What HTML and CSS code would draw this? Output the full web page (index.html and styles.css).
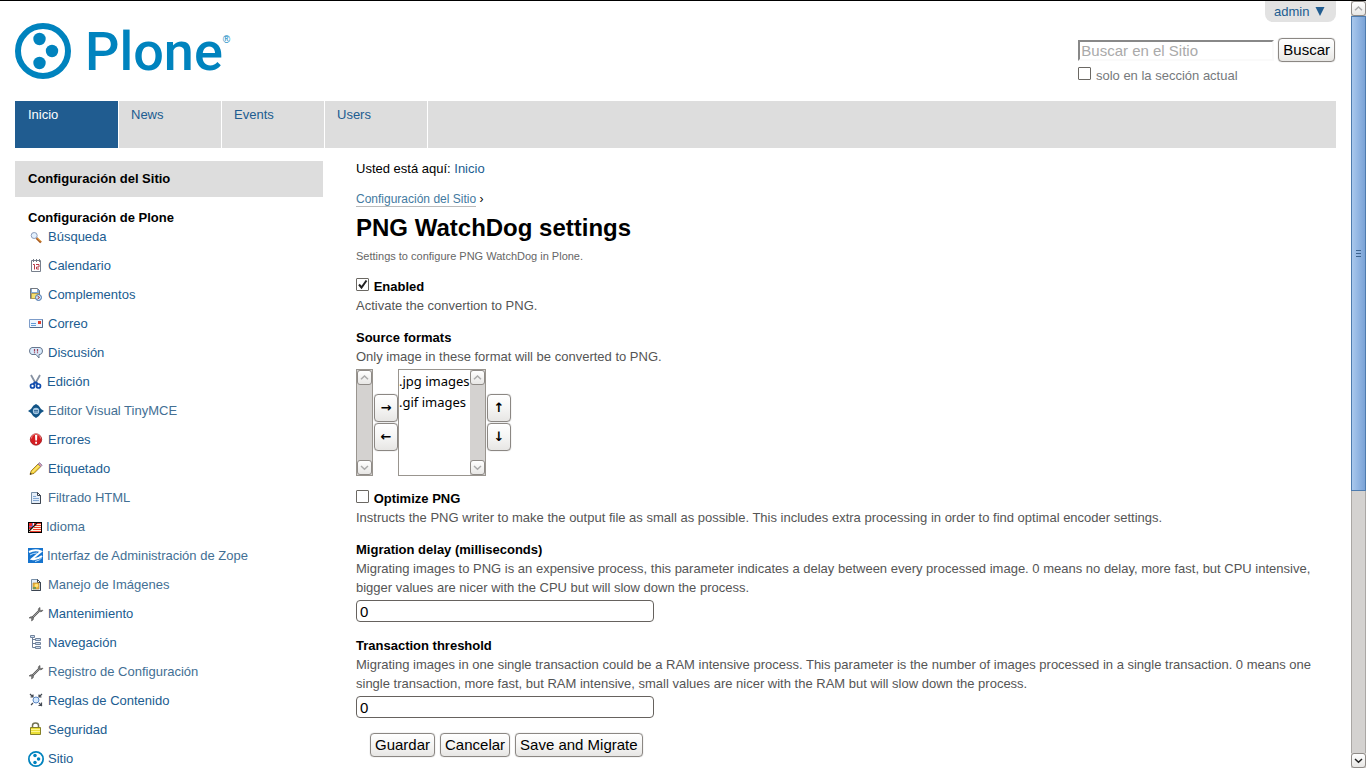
FILE: index.html
```html
<!DOCTYPE html>
<html lang="es">
<head>
<meta charset="utf-8">
<title>PNG WatchDog settings</title>
<link rel="stylesheet" href="styles.css">
</head>
<body>
<svg class="defs" aria-hidden="true">
  <symbol id="chev-up" viewBox="0 0 9 9"><path d="M1 6.2 4.5 3 8 6.2" fill="none" stroke="currentColor" stroke-width="1.5"/></symbol>
  <symbol id="chev-down" viewBox="0 0 9 9"><path d="M1 3 4.5 6.2 8 3" fill="none" stroke="currentColor" stroke-width="1.5"/></symbol>
  <symbol id="plone" viewBox="0 0 56 56"><circle cx="28" cy="28" r="25" fill="#fff" stroke="#0083be" stroke-width="6"/><circle cx="24.500" cy="16" r="6.200" fill="#0083be"/><circle cx="37" cy="28" r="6.200" fill="#0083be"/><circle cx="24.500" cy="40" r="6.200" fill="#0083be"/></symbol>
  <symbol id="wrench" viewBox="0 0 16 16"><path d="M4.500 11.500 11 5" stroke="#555" stroke-width="2.200"/><path d="M5 11 11 5" stroke="#bbb" stroke-width=".7"/><path d="M12 1.500c-1.500.5-2 1.800-1.500 3.500 1.500 1.200 3.500 1 4.500-.8l-2 .3-1-1z M1 12c1.500-1.700 3.200-1.500 4.200-.8.700 1.600.2 3-1.700 3.700l.3-1.900-1.300-1z" fill="#777" stroke="#555" stroke-width=".6"/></symbol>
  <symbol id="page" viewBox="0 0 16 16"><path d="M3.500 2.500h6l3 3v8h-9z" fill="#e4eef9" stroke="#7890a8"/><path d="M9.500 2.500v3h3z" fill="#fff" stroke="#3c4450"/><path d="M12.500 5.500v8h-9" fill="none" stroke="#3c4450"/></symbol>
</svg>
<div class="window">
  <div class="page">
    <header class="header">
      <a class="logo" href="#" aria-label="Plone">
        <svg class="logo-mark"><use href="#plone"/></svg>
        <span class="logo-name">Plone</span><span class="logo-reg">®</span>
      </a>
      <div class="tools">
        <a class="user" href="#">admin <svg class="user-arrow" viewBox="0 0 10 10"><path d="M0 0h10L5 10z" fill="#205c90"/></svg></a>
        <form class="search">
          <div class="search-row">
            <input class="search-input" type="text" placeholder="Buscar en el Sitio" aria-label="Buscar en el Sitio">
            <button class="btn" type="button">Buscar</button>
          </div>
          <label class="search-scope"><input class="check" type="checkbox"> solo en la sección actual</label>
        </form>
      </div>
    </header>
    <nav class="tabs">
      <a class="tab tab-on" href="#">Inicio</a>
      <a class="tab" href="#">News</a>
      <a class="tab" href="#">Events</a>
      <a class="tab" href="#">Users</a>
    </nav>
    <div class="columns">
      <aside class="side">
        <h2 class="side-head">Configuración del Sitio</h2>
        <h3 class="side-sub">Configuración de Plone</h3>
        <ul class="menu">
          <li><a class="item" href="#"><svg class="icon" viewBox="0 0 16 16"><path d="M8.500 9 13 13.500" stroke="#a8591e" stroke-width="2.400"/><path d="M9.500 9 13 12.500" stroke="#ffc35c" stroke-width="1"/><circle cx="6.200" cy="6.500" r="3" fill="#e3f1ff" stroke="#8c9cba"/></svg>Búsqueda</a></li>
          <li><a class="item" href="#"><svg class="icon" viewBox="0 0 16 16"><path d="M3.500 2.500h9v11h-9z" fill="#fff" stroke="#777f8c"/><path d="M5.500 1v3M8.500 1v3M11.500 1v3" stroke="#737b88"/><path d="M5 6.500h1.500v5M8 6.500h3v2.500H8.500v2H11" fill="none" stroke="#b83b49"/></svg>Calendario</a></li>
          <li><a class="item" href="#"><svg class="icon" viewBox="0 0 16 16"><path d="M2.500 1.500h7l2 2v8h-9z" fill="#82a9d5" stroke="#737880"/><path d="M4 2h5v3H4z" fill="#fff"/><path d="M3.500 6.500h7v5h-7z" fill="#f5e070" stroke="#b69c50"/><circle cx="10.500" cy="10.500" r="3" fill="#c6e2fb" stroke="#4c75a9"/><path d="m9.500 9 2 1.500-2 1.500" fill="none" stroke="#a33"/></svg>Complementos</a></li>
          <li><a class="item" href="#"><svg class="icon" viewBox="0 0 16 16"><path d="M1.500 3.500h13v8h-13z" fill="#eef5ff" stroke="#7d9cc9"/><path d="M2 11.500h12.500v-8" fill="none" stroke="#526a8b"/><path d="M3 7.500h5M3 9.500h5" stroke="#6199d5"/><path d="M10 5h3v3h-3z" fill="#e23d2d"/></svg>Correo</a></li>
          <li><a class="item" href="#"><svg class="icon" viewBox="0 0 16 16"><path d="M4 2.500h8Q14.500 3 14.500 6T12 9.500h-1v3.500L8 9.500H4Q1.500 9 1.500 6T4 2.500z" fill="#d8eafc" stroke="#68788f"/><path d="M6.500 4v2.500M9.500 4v2.500M6.500 7.200v1M9.500 7.200v1" stroke="#a33f51" stroke-width="1.200"/></svg>Discusión</a></li>
          <li><a class="item" href="#"><svg class="icon icon-narrow" viewBox="0 0 15 16"><path d="m3 1 5 9M12 1 7 10" stroke="#8792a3" stroke-width="1.800"/><path d="m7.500 8-2.500 2M7.500 8l2.500 2" stroke="#114cae" stroke-width="2"/><circle cx="4.500" cy="12" r="2" fill="#fff" stroke="#114cae" stroke-width="1.700"/><circle cx="10.500" cy="12" r="2" fill="#fff" stroke="#114cae" stroke-width="1.700"/></svg>Edición</a></li>
          <li><a class="item visited" href="#"><svg class="icon" viewBox="0 0 16 16"><path d="M0 8 3 6Q5 2 8 1q3 1 5 5l3 2-3 2q-2 4-5 5-3-1-5-5z" fill="#125486"/><circle cx="8" cy="8" r="3.200" fill="#a9cbe6"/><path d="M6 7.500h4M6 9h4" stroke="#41739f"/></svg>Editor Visual TinyMCE</a></li>
          <li><a class="item" href="#"><svg class="icon" viewBox="0 0 16 16"><circle cx="8" cy="7.500" r="5.700" fill="#d61c20" stroke="#931218" stroke-width=".7"/><path d="M3.500 6.500a4.500 4.500 0 0 1 9 0" fill="none" stroke="#f48a85"/><path d="M7 3h2.300L9 8.500H7.300zM7.200 9.700h1.800v2H7.200z" fill="#fff"/></svg>Errores</a></li>
          <li><a class="item" href="#"><svg class="icon" viewBox="0 0 16 16"><path d="m2 13.500 1.200-3.700L10 3l2.700 2.700L6 12.400z" fill="#f5d33a" stroke="#8c681c" stroke-width=".8"/><path d="m4.500 11 6.500-6.500" stroke="#fff0a8"/><path d="m10 3 1.500-1.500 2.700 2.700-1.500 1.500z" fill="#d59ab0" stroke="#7b749c" stroke-width=".7"/><path d="m2 13.500.5-1.700 1.300 1.200z" fill="#222"/></svg>Etiquetado</a></li>
          <li><a class="item visited" href="#"><svg class="icon" viewBox="0 0 16 16"><use href="#page"/><path d="M5 6.500h3M5 8.500h6M5 10.500h6" stroke="#84a9d4"/></svg>Filtrado HTML</a></li>
          <li><a class="item visited" href="#"><svg class="icon icon-flag" viewBox="0 2 14 16"><path d="M0 5h14v11H0z" fill="#000"/><path d="M1 6h12v9H1z" fill="#fff3df"/><path d="M7 6.500h6M7 8.500h6M6 10.500h7M5 12.500h8M2 14.500h11" stroke="#ee3b2a"/><path d="M1 6h3v3H1zM6 6h2v2H6zM1 10h3v2H1z" fill="#f02b24"/><path d="M4.500 6v5M1 9.500h5" stroke="#8968c5"/><path d="M9 6 1 14" stroke="#111" stroke-width="1.300"/></svg>Idioma</a></li>
          <li><a class="item visited" href="#"><svg class="icon icon-narrow" viewBox="0 0 15 16"><path d="M0 0h15v15H0z" fill="#1674ce"/><path d="M1 4Q7 1 13 3.500L4 11Q9 12 14 8" fill="none" stroke="#fff" stroke-width="2"/><path d="M2 7q3-2 7-2M7 13.500q5-1 7-4" fill="none" stroke="#bfe1ff"/></svg>Interfaz de Administración de Zope</a></li>
          <li><a class="item visited" href="#"><svg class="icon" viewBox="0 0 16 16"><use href="#page"/><path d="M5 6h6v6H5z" fill="#efb43e" stroke="#b68b35" stroke-width=".7"/><circle cx="8.500" cy="8.500" r="1.700" fill="#ffe67b"/><path d="M5 10h3v2H5z" fill="#759b55"/></svg>Manejo de Imágenes</a></li>
          <li><a class="item" href="#"><svg class="icon"><use href="#wrench"/></svg>Mantenimiento</a></li>
          <li><a class="item" href="#"><svg class="icon" viewBox="0 0 16 16"><path d="M4.500 3v9.500H8M4.500 4.500H8M4.500 8.500H8" fill="none" stroke="#6c7d96"/><path d="M2.500.5h4v2h-4zM7.500 3.500h5v2h-5zM7.500 7.500h5v2h-5zM7.500 11.500h5v2h-5z" fill="#cbdcf0" stroke="#71839c"/></svg>Navegación</a></li>
          <li><a class="item visited" href="#"><svg class="icon"><use href="#wrench"/></svg>Registro de Configuración</a></li>
          <li><a class="item" href="#"><svg class="icon" viewBox="0 0 16 16"><path d="m2 1 3 3M14 1l-3 3M3 12l2-2M14 13l-3-3M5 1.500V4H2.500M11 1.500V4h2.500M10.500 12.500h3v-3" fill="none" stroke="#444b54" stroke-width="1.200"/><circle cx="8" cy="7" r="3" fill="#d5eaff" stroke="#5a86c3"/></svg>Reglas de Contenido</a></li>
          <li><a class="item" href="#"><svg class="icon" viewBox="0 0 16 16"><path d="M4.500 6V3.500Q4.500 1 7.500 1t3 2.500V6" fill="none" stroke="#727255" stroke-width="1.500"/><path d="M2.500 5.500h10v7h-10z" fill="#eadf37" stroke="#858029"/><path d="M3 7.500h9M3 9.500h9" stroke="#fff58e"/></svg>Seguridad</a></li>
          <li><a class="item" href="#"><svg class="icon"><use href="#plone"/></svg>Sitio</a></li>
        </ul>
      </aside>
      <main class="content">
        <div class="trail">Usted está aquí: <a class="link" href="#">Inicio</a></div>
        <div class="parent"><a class="parent-link" href="#">Configuración del Sitio</a> ›</div>
        <h1 class="title">PNG WatchDog settings</h1>
        <p class="summary">Settings to configure PNG WatchDog in Plone.</p>
        <form class="form">
          <div class="field">
            <div class="name"><input class="check" id="enabled" type="checkbox" checked> <label for="enabled">Enabled</label></div>
            <p class="help">Activate the convertion to PNG.</p>
          </div>
          <div class="field">
            <label class="name" for="formats">Source formats</label>
            <p class="help">Only image in these format will be converted to PNG.</p>
            <div class="picker">
              <div class="list">
                <select class="options options-empty" multiple size="5" aria-label="Available formats"></select>
                <div class="bar bar-small"><span class="bar-btn"><svg class="chev"><use href="#chev-up"/></svg></span><span class="bar-btn"><svg class="chev"><use href="#chev-down"/></svg></span></div>
              </div>
              <div class="moves"><button class="btn move" type="button">→</button><button class="btn move" type="button">←</button></div>
              <div class="list">
                <select class="options" id="formats" multiple size="5"><option>.jpg images</option><option>.gif images</option></select>
                <div class="bar bar-small"><span class="bar-btn"><svg class="chev"><use href="#chev-up"/></svg></span><span class="bar-btn"><svg class="chev"><use href="#chev-down"/></svg></span></div>
              </div>
              <div class="moves"><button class="btn move" type="button">↑</button><button class="btn move" type="button">↓</button></div>
            </div>
          </div>
          <div class="field">
            <div class="name"><input class="check" id="optimize" type="checkbox"> <label for="optimize">Optimize PNG</label></div>
            <p class="help">Instructs the PNG writer to make the output file as small as possible. This includes extra processing in order to find optimal encoder settings.</p>
          </div>
          <div class="field">
            <label class="name" for="delay">Migration delay (milliseconds)</label>
            <p class="help">Migrating images to PNG is an expensive process, this parameter indicates a delay between every processed image. 0 means no delay, more fast, but CPU intensive, bigger values are nicer with the CPU but will slow down the process.</p>
            <input class="text" id="delay" type="text" value="0">
          </div>
          <div class="field">
            <label class="name" for="threshold">Transaction threshold</label>
            <p class="help">Migrating images in one single transaction could be a RAM intensive process. This parameter is the number of images processed in a single transaction. 0 means one single transaction, more fast, but RAM intensive, small values are nicer with the RAM but will slow down the process.</p>
            <input class="text" id="threshold" type="text" value="0">
          </div>
          <div class="actions">
            <button class="btn" type="button">Guardar</button>
            <button class="btn" type="button">Cancelar</button>
            <button class="btn" type="button">Save and Migrate</button>
          </div>
        </form>
      </main>
    </div>
  </div>
  <div class="bar bar-page">
    <span class="bar-btn"><svg class="chev"><use href="#chev-up"/></svg></span>
    <span class="thumb"><svg class="grip" viewBox="0 0 5 7"><path d="M0 .5h5M0 3.500h5M0 6.500h5" stroke="#3d648f"/></svg></span>
    <span class="track"></span>
    <span class="bar-btn bar-btn-on"><svg class="chev"><use href="#chev-down"/></svg></span>
  </div>
</div>
</body>
</html>
```
FILE: styles.css
```css
* { box-sizing: border-box; }

body {
  margin: 0;
  background: #fff;
  color: #000;
  font: 13px/19px "Liberation Sans", Arial, sans-serif;
}

h1, h2, h3, p, ul { margin: 0; padding: 0; }
a { color: #205c90; text-decoration: none; }
.defs { position: absolute; width: 0; height: 0; }

.window {
  display: flex;
  height: 100vh;
  border-top: 1px solid #000;
  overflow: hidden;
}

.page { flex: 1; min-width: 0; padding: 0 15px; }

/* Header */
.header { display: flex; justify-content: space-between; height: 100px; }
.logo { display: flex; align-items: flex-start; padding-top: 22px; color: #0083be; }
.logo-mark { width: 56px; height: 56px; margin-right: 14px; }
.logo-name { font: 500 54px/58px Roboto, sans-serif; }
.logo-reg { font-size: 10px; line-height: 10px; padding-top: 12px; }

.tools { display: flex; flex-direction: column; align-items: flex-end; }
.user {
  padding: 1px 11px 1px 9px;
  height: 21px;
  background: #e2e2e2;
  border-radius: 0 0 8px 8px;
}
.user-arrow { width: 10px; height: 9px; margin-left: 2px; }
.search { margin-top: 16px; padding-right: 1px; }
.search-row { display: flex; align-items: center; gap: 4px; }
.search-input {
  width: 196px;
  height: 21px;
  padding: 0 1px;
  border: 2px solid;
  border-color: #888 #fafafa #fafafa #888;
  font: 15px/17px "Liberation Sans", Arial, sans-serif;
}
.search-input::placeholder { color: #aaa; }
.search-scope { display: block; padding-top: 4px; color: #76797c; }

.btn {
  height: 24px;
  padding: 0 4px;
  border: 1px solid #8b8783;
  border-radius: 4px;
  background: linear-gradient(#fff, #f5f5f4 50%, #e7e6e4);
  box-shadow: 0 0 1px #999;
  color: #000;
  font: 15px/20px "Liberation Sans", Arial, sans-serif;
}

.check {
  appearance: none;
  width: 13px;
  height: 13px;
  margin: 0 1px 0 0;
  border: 1px solid #6b6863;
  border-radius: 1px;
  background: #fff;
  vertical-align: 0;
}
.check:checked {
  background: #fff url("data:image/svg+xml,%3Csvg xmlns='http://www.w3.org/2000/svg' viewBox='0 0 11 11'%3E%3Cpath d='M2 5.500 4.500 8.500 9.500 1.500' fill='none' stroke='%23222' stroke-width='2'/%3E%3C/svg%3E");
}

/* Navigation */
.tabs { display: flex; height: 47px; background: #ddd; }
.tab { width: 103px; padding: 4px 13px; border-right: 1px solid #fff; }
.tab-on { width: 104px; background: #205c90; color: #fff; }
.tab + .tab { padding-left: 12px; }

.columns { display: flex; gap: 33px; padding-top: 13px; }

/* Sidebar */
.side { flex: 0 0 308px; }
.side-head { padding: 8px 13px 9px; background: #ddd; font-size: 13px; line-height: 19px; }
.side-sub { padding: 11px 13px 0; font-size: 13px; line-height: 19px; }
.menu { padding-left: 13px; list-style: none; }
.item { display: flex; align-items: flex-start; gap: 4px; height: 29px; }
.visited { color: #436f94; }
.icon { flex: none; width: 16px; height: 16px; margin-top: 2px; }
.icon-narrow { width: 15px; }
.icon-flag { width: 14px; }

/* Content */
.content { flex: 1; min-width: 0; margin-top: -2px; }
.trail { padding-bottom: 12px; }
.parent { font-size: 12px; }
.parent-link { color: #437a9f; border-bottom: 1px solid #bbb; }
.title { font-size: 24px; line-height: 38px; }
.summary { color: #666; font-size: 11px; line-height: 19px; }
.form { padding-top: 11px; }
.field { padding-bottom: 13px; }
.name { display: block; font-weight: bold; }
.help { color: #555; }
.text {
  display: block;
  width: 298px;
  height: 22px;
  margin: 3px 0 1px;
  padding: 0 3px;
  border: 1px solid #66625e;
  border-radius: 4px;
  font: 15px/20px "Liberation Sans", Arial, sans-serif;
}
.actions { display: flex; gap: 5px; padding: 1px 14px; }

/* Ordered list picker */
.picker { display: flex; align-items: center; padding-top: 3px; }
.list { display: flex; height: 107px; border: 1px solid #99958f; }
.options {
  width: 71px;
  height: 100%;
  padding: 0;
  border: 0;
  border-radius: 0;
  outline: 0;
  background: #fff;
  color: #000;
  font: 13px "Noto Sans", sans-serif;
  overflow: hidden;
  scrollbar-width: none;
}
.options-empty { width: 0; }
.options option { padding: 2px 0 1px; }
.moves { display: flex; flex-direction: column; gap: 1px; padding-left: 1px; }
.move { width: 24px; height: 28px; padding: 0; font: bold 13px/20px "DejaVu Sans", sans-serif; }

/* Scroll bars */
.bar {
  display: flex;
  flex-direction: column;
  justify-content: space-between;
  width: 15px;
  background: #d4d2d0;
  color: #aaa;
}
.bar-btn {
  display: flex;
  align-items: center;
  justify-content: center;
  height: 15px;
  border: 1px solid #8f8b87;
  border-radius: 3px;
  background: linear-gradient(#fff, #e8e7e5);
}
.bar-btn-on { color: #222; }
.chev { width: 9px; height: 9px; }
.bar-page { flex: none; }
.thumb {
  flex: 475;
  display: flex;
  align-items: center;
  justify-content: center;
  border: 1px solid #4f7cae;
  background: linear-gradient(to right, #a9c8ec, #91b5e2 50%, #7ba3d6);
}
.grip { width: 5px; height: 7px; }
.track { flex: 263; border: solid #aaa7a4; border-width: 0 1px; }
```
